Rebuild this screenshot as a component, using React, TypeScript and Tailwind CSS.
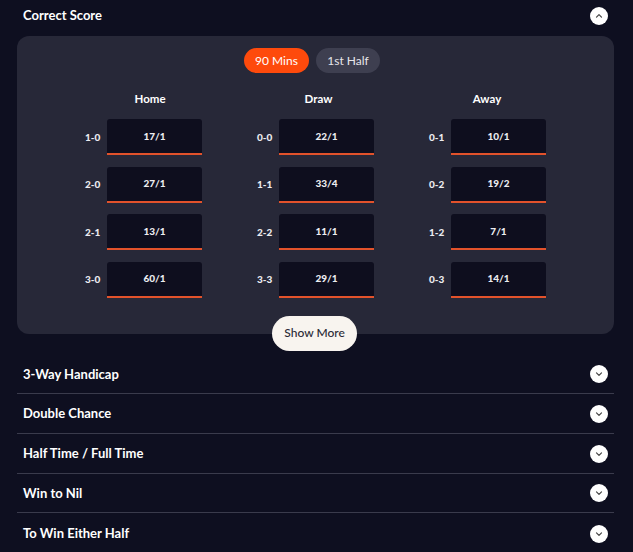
import React from "react";

const rows = [
  [["1-0", "17/1"], ["0-0", "22/1"], ["0-1", "10/1"]],
  [["2-0", "27/1"], ["1-1", "33/4"], ["0-2", "19/2"]],
  [["2-1", "13/1"], ["2-2", "11/1"], ["1-2", "7/1"]],
  [["3-0", "60/1"], ["3-3", "29/1"], ["0-3", "14/1"]],
];

const markets = ["3-Way Handicap", "Double Chance", "Half Time / Full Time", "Win to Nil", "To Win Either Half"];

function Chevron({ up }: { up?: boolean }) {
  return (
    <div className="w-[18px] h-[18px] rounded-full bg-white flex items-center justify-center">
      <svg width="8" height="8" viewBox="0 0 8 8" fill="none">
        {up ? (
          <path d="M1.5 5.2 L4 2.7 L6.5 5.2" stroke="#444" strokeWidth="1.2" strokeLinecap="round" strokeLinejoin="round" />
        ) : (
          <path d="M1.5 2.8 L4 5.3 L6.5 2.8" stroke="#444" strokeWidth="1.2" strokeLinecap="round" strokeLinejoin="round" />
        )}
      </svg>
    </div>
  );
}

export default function App() {
  const cols = [0, 1, 2];
  const heads = ["Home", "Draw", "Away"];
  return (
    <div className="w-[633px] h-[552px] overflow-hidden bg-[#0e0f20] pl-[17px] pr-[19px]" style={{ fontFamily: "Lato, 'Noto Sans', sans-serif" }}>
      <div className="h-[31px] flex items-center justify-between pl-[6px] pr-[6px]">
        <span className="text-white font-bold text-[13px]">Correct Score</span>
        <Chevron up />
      </div>
      <div className="mt-[5px] rounded-[12px] bg-[#272838] pt-[12px] pb-[36px]">
        <div className="flex justify-center gap-[7px] pr-[7px]">
          <div className="h-[25px] w-[65px] rounded-full bg-[#fe4a0c] text-white text-[12px] flex items-center justify-center">90 Mins</div>
          <div className="h-[25px] w-[64px] rounded-full bg-[#3e3f50] text-[#e6e6ea] text-[12px] flex items-center justify-center">1st Half</div>
        </div>
        <div className="flex justify-center gap-[73.5px] mt-[18px] mb-[12px] pl-[6px]">
          {heads.map((h) => (
            <div key={h} className="w-[95px] h-[16px] text-center text-white font-bold text-[11.5px] leading-[16px]">{h}</div>
          ))}
        </div>
        <div className="flex justify-center gap-[55px]">
          {cols.map((c) => (
            <div key={c} className="flex flex-col w-[117px] gap-[11.5px]">
              {rows.map((r, i) => (
                <div key={i} className="flex items-center">
                  <div className="w-[22px] pr-[7px] text-right text-[10px] font-black text-[#ececf0] whitespace-nowrap">
                    {r[c][0]}
                  </div>
                  <div className="w-[95px] h-[36px] rounded-t-[3px] bg-[#0e0e1e] border-b-2 border-[#e2522b] flex items-center justify-center text-[10px] font-black text-[#ececf0]">
                    {r[c][1]}
                  </div>
                </div>
              ))}
            </div>
          ))}
        </div>
      </div>
      <div className="flex justify-center -mt-[18px] pr-[2px]">
        <div className="w-[85px] h-[35px] rounded-full bg-[#f8f4ef] text-[#2a2a35] text-[12px] font-medium flex items-center justify-center">Show More</div>
      </div>
      <div className="mt-[4px]">
        {markets.map((m, i) => (
          <div key={m} className={`h-[39.7px] pt-[1px] flex items-center justify-between px-[6px] ${i < markets.length - 1 ? "border-b border-[#3a3b4c]" : ""}`}>
            <span className="text-white font-bold text-[13px]">{m}</span>
            <Chevron />
          </div>
        ))}
      </div>
    </div>
  );
}
